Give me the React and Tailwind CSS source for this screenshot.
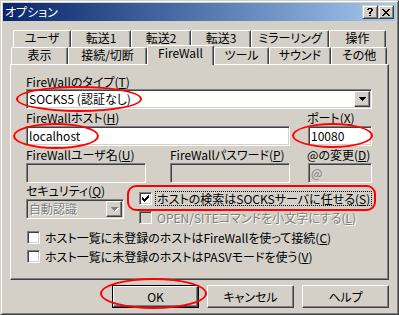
import React from 'react';

const raised = "border border-t-white border-l-white border-r-[#404040] border-b-[#404040] shadow-[inset_-1px_-1px_0_#808080]";
const sunken = "border border-t-[#808080] border-l-[#808080] border-r-white border-b-white shadow-[inset_1px_1px_0_#404040,inset_-1px_-1px_0_#d4d0c8]";
const disText = "text-[#808080] [text-shadow:1px_1px_0_#fff]";

const row1 = [
  ['ユーザ', 'w-[58px]'],
  ['転送1', 'w-[60px]'],
  ['転送2', 'w-[60px]'],
  ['転送3', 'w-[60px]'],
  ['ミラーリング', 'w-[78px]'],
  ['操作', 'w-[57px]'],
];
const row2 = [
  ['表示', 'w-[57px]', false],
  ['接続/切断', 'w-[79px]', false],
  ['FireWall', 'w-[67px]', true],
  ['ツール', 'w-[55px]', false],
  ['サウンド', 'w-[62px]', false],
  ['その他', 'w-[56px]', false],
];

function U({ children }) {
  return <span className="underline decoration-1 underline-offset-[1px]">{children}</span>;
}

function Tab({ label, w, sel }) {
  return (
    <div
      className={`${w} ${sel ? 'h-[20px] -mb-[1px] relative z-10' : 'h-[17px]'} shrink-0 bg-[#d4d0c8] border-t border-l border-r border-t-white border-l-white border-r-[#404040] shadow-[inset_-1px_0_0_#808080] rounded-t-[2px] flex justify-center pt-[1px]`}
    >
      {label}
    </div>
  );
}

function Arrow({ disabled }) {
  const d = "M0 0h7v1h-1v1h-1v1h-1v1h-1v-1h-1v-1h-1v-1h-1z";
  return (
    <svg width="8" height="5" viewBox="0 0 8 5" shapeRendering="crispEdges">
      {disabled && <path d={d} transform="translate(1 1)" fill="#fff" />}
      <path d={d} fill={disabled ? '#808080' : '#000'} />
    </svg>
  );
}

function DropBtn({ disabled }) {
  return (
    <div className={`ml-auto w-[16px] h-[16px] shrink-0 bg-[#d4d0c8] ${raised} flex items-center justify-center pl-[1px]`}>
      <Arrow disabled={disabled} />
    </div>
  );
}

function Lbl({ children, className = '' }) {
  return <div className={`h-[12px] whitespace-nowrap ${className}`}>{children}</div>;
}

function Check({ checked, disabled, focus, children, className = '' }) {
  return (
    <div className={`flex items-center h-[13px] ${className}`}>
      <div className={`w-[13px] h-[13px] shrink-0 ${sunken} ${disabled ? 'bg-[#d4d0c8]' : 'bg-white'} flex items-center justify-center`}>
        {checked && (
          <svg width="7" height="7" viewBox="0 0 7 7" shapeRendering="crispEdges">
            <path
              d="M6 0h1v1h-1zM5 1h2v1h-2zM0 2h1v1h-1zM4 2h3v1h-3zM0 3h2v1h-2zM3 3h3v1h-3zM0 4h5v1h-5zM1 5h3v1h-3zM2 6h1v1h-1z"
              fill="#000"
            />
          </svg>
        )}
      </div>
      {focus ? (
        <span className="ml-[3px] h-[15px] flex items-center border border-dotted border-black px-[1px] whitespace-nowrap">{children}</span>
      ) : (
        <span className={`ml-[5px] whitespace-nowrap ${disabled ? disText : ''}`}>{children}</span>
      )}
    </div>
  );
}

function Btn({ children }) {
  return (
    <div className={`w-[87px] h-[23px] ${raised} flex items-center justify-center`}>{children}</div>
  );
}

export default function App() {
  return (
    <div className="relative w-[399px] h-[315px] bg-[#d4d0c8] border border-t-[#d4d0c8] border-l-[#d4d0c8] border-r-[#404040] border-b-[#404040] shadow-[inset_1px_1px_0_#fff,inset_-1px_-1px_0_#808080] p-[2px] flex flex-col text-[12px] leading-[12px] text-black [font-family:'Noto_Sans_CJK_JP',sans-serif] [font-feature-settings:'palt'] overflow-hidden">
      {/* Title bar */}
      <div className="h-[18px] shrink-0 flex items-center bg-linear-to-r from-[#0a246a] to-[#a6caf0] pl-[2px] pr-[2px]">
        <span className="text-white">オプション</span>
        <div className="ml-auto flex">
          <div className="w-[16px] h-[14px] bg-[#d4d0c8] border border-t-[#d4d0c8] border-l-[#d4d0c8] border-r-[#404040] border-b-[#404040] shadow-[inset_1px_1px_0_#fff,inset_-1px_-1px_0_#808080] flex items-center justify-center">
            <svg width="8" height="8" viewBox="0 0 8 8" shapeRendering="crispEdges">
              <path d="M2 0h4v1H2zM1 1h2v1H1zM5 1h2v1H5zM5 2h2v1H5zM4 3h2v1H4zM3 4h2v1H3zM3 5h2v1H3zM3 7h2v1H3z" fill="#000" />
            </svg>
          </div>
          <div className="w-[16px] h-[14px] bg-[#d4d0c8] border border-t-[#d4d0c8] border-l-[#d4d0c8] border-r-[#404040] border-b-[#404040] shadow-[inset_1px_1px_0_#fff,inset_-1px_-1px_0_#808080] flex items-center justify-center">
            <svg width="8" height="7" viewBox="0 0 8 7" shapeRendering="crispEdges">
              <path d="M0 0h2v1H0zM6 0h2v1H6zM1 1h2v1H1zM5 1h2v1H5zM2 2h4v1H2zM3 3h2v1H3zM2 4h4v1H2zM1 5h2v1H1zM5 5h2v1H5zM0 6h2v1H0zM6 6h2v1H6z" fill="#000" />
            </svg>
          </div>
        </div>
      </div>

      {/* Tabs */}
      <div className="mt-[9px] flex flex-col">
        <div className="ml-[10px] flex h-[17px]">
          {row1.map(([l, w]) => (
            <Tab key={l} label={l} w={w} />
          ))}
        </div>
        <div className="ml-[8px] flex items-end h-[17px]">
          {row2.map(([l, w, s]) => (
            <Tab key={l} label={l} w={w} sel={s} />
          ))}
        </div>
      </div>

      {/* Panel */}
      <div className="mx-[7px] h-[216px] shrink-0 border border-t-white border-l-white border-r-[#404040] border-b-[#404040] shadow-[inset_-1px_-1px_0_#808080] pt-[11px] pl-[15px] flex flex-col">
        <Lbl>FireWallのタイプ(<U>T</U>)</Lbl>
        <div className={`mt-[1px] w-[346px] h-[20px] bg-white ${sunken} p-[1px] flex items-center`}>
          <span className="pl-[1px]">SOCKS5 (認証なし)</span>
          <DropBtn />
        </div>

        <div className="mt-[3px] flex">
          <Lbl className="w-[281px]">FireWallホスト(<U>H</U>)</Lbl>
          <Lbl>ポート(<U>X</U>)</Lbl>
        </div>
        <div className="mt-[2px] flex">
          <div className={`w-[264px] h-[20px] bg-white ${sunken} p-[1px] flex items-center`}>
            <span className="pl-[1px]">localhost</span>
          </div>
          <div className={`ml-[18px] w-[64px] h-[20px] bg-white ${sunken} p-[1px] flex items-center`}>
            <span className="pl-[1px]">10080</span>
          </div>
        </div>

        <div className="mt-[3px] flex">
          <Lbl className="w-[144px]">FireWallユーザ名(<U>U</U>)</Lbl>
          <Lbl className="w-[137px]">FireWallパスワード(<U>P</U>)</Lbl>
          <Lbl>@の変更(<U>D</U>)</Lbl>
        </div>
        <div className="mt-[2px] flex">
          <div className={`w-[120px] h-[20px] bg-[#d4d0c8] ${sunken}`} />
          <div className={`ml-[24px] w-[120px] h-[20px] bg-[#d4d0c8] ${sunken}`} />
          <div className={`ml-[18px] w-[64px] h-[20px] bg-[#d4d0c8] ${sunken} p-[1px] flex items-center`}>
            <span className="pl-[1px] text-[#808080]">@</span>
          </div>
        </div>

        <div className="flex h-[41px]">
          <div className="w-[113px] flex flex-col">
            <Lbl className="mt-[2px]">セキュリティ(<U>Q</U>)</Lbl>
            <div className={`mt-[2px] w-[98px] h-[20px] bg-[#d4d0c8] ${sunken} p-[1px] flex items-center`}>
              <span className={`pl-[1px] ${disText}`}>自動認識</span>
              <DropBtn disabled />
            </div>
          </div>
          <div className="flex flex-col pt-[9px] gap-[6px]">
            <Check checked focus>
              ホストの検索はSOCKSサーバに任せる(<U>S</U>)
            </Check>
            <Check disabled>
              OPEN/SITEコマンドを小文字にする(<U>L</U>)
            </Check>
          </div>
        </div>

        <Check className="mt-[7px] ml-[1px]">
          ホスト一覧に未登録のホストはFireWallを使って接続(<U>C</U>)
        </Check>
        <Check className="mt-[6px] ml-[1px]">
          ホスト一覧に未登録のホストはPASVモードを使う(<U>V</U>)
        </Check>
      </div>

      {/* Buttons */}
      <div className="mt-[5px] mr-[7px] flex justify-end gap-[8px]">
        <div className="w-[87px] h-[23px] border border-black">
          <div className={`h-full ${raised} flex items-center justify-center`}>OK</div>
        </div>
        <Btn>キャンセル</Btn>
        <Btn>ヘルプ</Btn>
      </div>

      {/* Red annotation marks */}
      <div className="pointer-events-none absolute left-[15px] top-[85px] w-[126px] h-[26px] rounded-[50%] border-2 border-[#ff0000]" />
      <div className="pointer-events-none absolute left-[12px] top-[122px] w-[86px] h-[26px] rounded-[50%] border-2 border-[#ff0000]" />
      <div className="pointer-events-none absolute left-[291px] top-[122px] w-[81px] h-[25px] rounded-[50%] border-2 border-[#ff0000]" />
      <div className="pointer-events-none absolute left-[99px] top-[277px] w-[107px] h-[31px] rounded-[50%] border-2 border-[#ff0000]" />
      <div className="pointer-events-none absolute left-[126px] top-[184px] w-[249px] h-[26px] rounded-[9px] border-2 border-[#ff0000]" />
    </div>
  );
}
